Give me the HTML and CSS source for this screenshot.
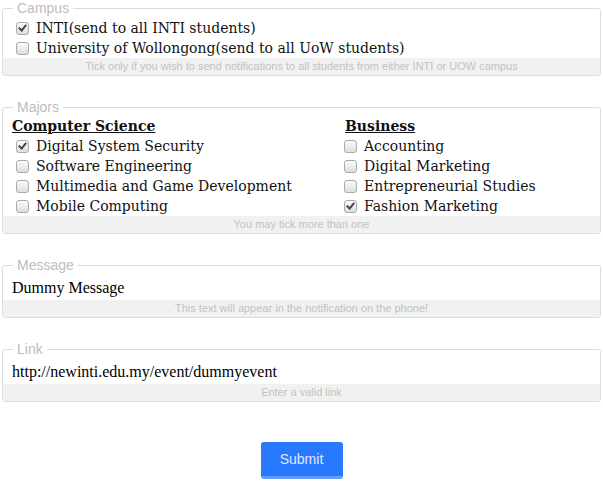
FILE: index.html
```html
<!DOCTYPE html>
<html>
<head>
<meta charset="utf-8">
<link rel="stylesheet" href="styles.css">
</head>
<body>
<form class="form">
  <fieldset class="group">
    <legend class="group-title">Campus</legend>
    <div class="group-body">
      <label class="opt"><span class="box checked"></span>INTI(send to all INTI students)</label>
      <label class="opt"><span class="box"></span>University of Wollongong(send to all UoW students)</label>
    </div>
    <div class="help">Tick only if you wish to send notifications to all students from either INTI or UOW campus</div>
  </fieldset>

  <fieldset class="group">
    <legend class="group-title">Majors</legend>
    <div class="group-body majors">
      <div class="col">
        <div class="col-title">Computer Science</div>
        <label class="opt"><span class="box checked"></span>Digital System Security</label>
        <label class="opt"><span class="box"></span>Software Engineering</label>
        <label class="opt"><span class="box"></span>Multimedia and Game Development</label>
        <label class="opt"><span class="box"></span>Mobile Computing</label>
      </div>
      <div class="col col-right">
        <div class="col-title">Business</div>
        <label class="opt"><span class="box"></span>Accounting</label>
        <label class="opt"><span class="box"></span>Digital Marketing</label>
        <label class="opt"><span class="box"></span>Entrepreneurial Studies</label>
        <label class="opt"><span class="box checked"></span>Fashion Marketing</label>
      </div>
    </div>
    <div class="help">You may tick more than one</div>
  </fieldset>

  <fieldset class="group">
    <legend class="group-title">Message</legend>
    <div class="group-body field">Dummy Message</div>
    <div class="help">This text will appear in the notification on the phone!</div>
  </fieldset>

  <fieldset class="group">
    <legend class="group-title">Link</legend>
    <div class="group-body field">http://newinti.edu.my/event/dummyevent</div>
    <div class="help">Enter a valid link</div>
  </fieldset>

  <div class="actions">
    <button type="button" class="submit">Submit</button>
  </div>
</form>
</body>
</html>
```
FILE: styles.css
```css
html, body {
  margin: 0;
  padding: 0;
  background: #ffffff;
}

.form {
  display: flex;
  flex-direction: column;
  gap: 23px;
}

.group {
  margin: 0 2px;
  padding: 0;
  border: 1px solid #dcdcdc;
  border-radius: 3px;
  min-width: 0;
}

.group-title {
  margin-left: 10px;
  padding: 0 4px;
  font-family: "Liberation Sans", Arial, sans-serif;
  font-size: 14px;
  line-height: 16px;
  color: #bdbdbd;
}

.group-body {
  padding: 2px 9px 0 9px;
}

.opt {
  display: flex;
  align-items: center;
  height: 20px;
  padding-left: 4px;
  font-family: "DejaVu Serif", Georgia, serif;
  font-size: 14px;
  color: #111;
}

.col-right .opt {
  padding-left: 0;
}

.box {
  width: 11px;
  height: 11px;
  border: 1px solid #a9a9a9;
  border-radius: 3px;
  background: linear-gradient(#fbfbfb, #dedede);
  margin-right: 7px;
  flex: none;
  position: relative;
}

.box.checked::after {
  content: "";
  position: absolute;
  left: 3px;
  top: 0px;
  width: 3px;
  height: 6px;
  border-right: 2px solid #444;
  border-bottom: 2px solid #444;
  transform: rotate(40deg);
}

.majors {
  display: grid;
  grid-template-columns: 332px 1fr;
  padding-top: 1px;
}

.col-right .col-title {
  padding-left: 1px;
}

.col-title {
  font-family: "DejaVu Serif", Georgia, serif;
  font-weight: bold;
  font-size: 14px;
  line-height: 20px;
  text-decoration: underline;
  color: #111;
}

.field {
  font-family: "Liberation Serif", "Times New Roman", serif;
  font-size: 16px;
  line-height: 20px;
  padding-top: 5px;
  padding-bottom: 2px;
  color: #000;
}

.help {
  background: #f1f1f1;
  text-align: center;
  font-family: "Liberation Sans", Arial, sans-serif;
  font-size: 11px;
  line-height: 17px;
  color: #c2c2c2;
}

.actions {
  display: flex;
  justify-content: center;
  padding-top: 17px;
}

.submit {
  width: 82px;
  height: 37px;
  border: none;
  border-bottom: 3px solid #5f9dff;
  border-radius: 3px;
  background: #2979ff;
  color: #dfe9ff;
  font-family: "Liberation Sans", Arial, sans-serif;
  font-size: 14px;
  padding: 0;
}
```
